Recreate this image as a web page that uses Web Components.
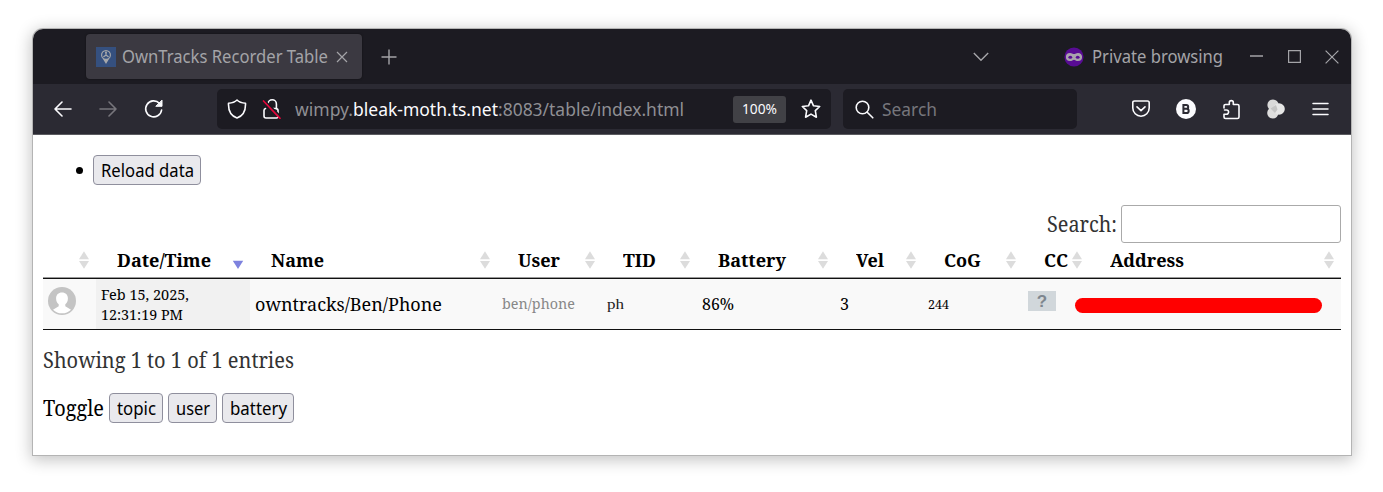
<!DOCTYPE html>
<html lang="en"><head><meta charset="utf-8"><title>OwnTracks Recorder Table</title>
<style>
body{margin:0;background:#fff;width:1383px;height:492px;overflow:hidden;font-family:"Noto Sans",sans-serif}
</style></head><body>
<browser-window></browser-window>
<script>
const define=(name,html,ready)=>customElements.define(name,class extends HTMLElement{
  constructor(){super();this.attachShadow({mode:'open'}).innerHTML=html}
  connectedCallback(){if(ready)ready.call(this)}
});
// A text run condensed or widened to a given width: w = width, s = font size
define('fit-text','<style>:host{display:block;white-space:pre;flex:none;line-height:1.3}span{display:inline-block;transform-origin:0 50%}</style><span><slot></slot></span>',function(){
  this.style.fontSize=this.getAttribute('s')+'px';
  const w=+this.getAttribute('w'),sp=this.shadowRoot.querySelector('span');
  const nat=sp.getBoundingClientRect().width;
  sp.style.transform='scaleX('+w/nat+')';this.style.width=w+'px';
});
define('tab-strip',`<style>
:host{display:flex;height:55px;background:#1c1b22;align-items:center;color:#a4a4a8}
.tab{display:flex;align-items:center;margin-left:52.500px;width:276px;height:45px;background:#3b3941;border-radius:4px;box-shadow:0 0 2px #0008}
svg{display:block;flex:none}
.fav{margin-left:10px}.tab fit-text{margin-left:6.500px}.x{margin-left:7.500px}.plus{margin-left:19.500px}
.chev{margin-left:576px}.mask{margin-left:75px}.pb{margin-left:7.500px}.min{margin-left:27.500px}.max{margin-left:24.500px}.cl{margin-left:24px}
</style>
<div class="tab"><svg class="fav" width="20" height="20" viewBox="0 0 20 20"><rect width="20" height="20" fill="#35507f"/><path d="M10 17 6.8 11.8A5 5 0 1 1 13.2 11.8Z" fill="#a5a7ab"/><circle cx="10" cy="8" r="3.8" fill="#35507f"/><path d="M10 5.2v3M7.4 10l2.600-2 2.600 2" fill="none" stroke="#a5a7ab" stroke-width="1.3"/><circle cx="10" cy="5.4" r="1" fill="#a5a7ab"/></svg>
<fit-text w="206" s="17.600">OwnTracks Recorder Table</fit-text>
<svg class="x" width="12" height="12" viewBox="0 0 12 12"><path d="M1 1l10 10M11 1L1 11" stroke="#a4a4a8" stroke-width="1.2"/></svg></div>
<svg class="plus" width="16" height="16" viewBox="0 0 16 16"><path d="M8 .5v15M.5 8h15" stroke="#a4a4a8" stroke-width="1.4"/></svg>
<svg class="chev" width="16" height="10" viewBox="0 0 16 10"><path d="M.8 1 8 8.3 15.2 1" fill="none" stroke="#a4a4a8" stroke-width="1.4"/></svg>
<svg class="mask" width="20" height="20" viewBox="0 0 20 20"><circle cx="10" cy="10" r="9.6" fill="#580c94"/><path d="M6 7.200c-2 0-3 1.300-3 2.900s1 2.900 3 2.900c1.800 0 2.600-1.400 4-1.400s2.200 1.400 4 1.400c2 0 3-1.300 3-2.900s-1-2.900-3-2.900c-1.800 0-2.600.9-4 .9s-2.200-.9-4-.9Z" fill="#a9a3ad" stroke="#a9a3ad" stroke-width="2.200"/><ellipse cx="6.300" cy="10.200" rx="1.900" ry="1.500" fill="#580c94"/><ellipse cx="13.700" cy="10.200" rx="1.900" ry="1.500" fill="#580c94"/></svg>
<fit-text class="pb" w="131" s="17.600">Private browsing</fit-text>
<svg class="min" width="13" height="3" viewBox="0 0 13 3"><path d="M0 1h13" stroke="#a4a4a8" stroke-width="1.3"/></svg>
<svg class="max" width="13" height="13" viewBox="0 0 13 13"><path d="M.6.6h11.800v11.800H.6z" fill="none" stroke="#a4a4a8" stroke-width="1.2"/></svg>
<svg class="cl" width="14" height="14" viewBox="0 0 14 14"><path d="M.6.6l12.800 12.800M13.400.6.6 13.400" stroke="#a4a4a8" stroke-width="1.2"/></svg>`);
define('nav-bar',`<style>
:host{display:flex;height:50px;background:#2b2a33;align-items:center;color:#fbfbfe;border-bottom:1px solid #5b5b60}
svg{display:block;flex:none;fill:none;stroke:#fbfbfe;stroke-width:1.6;stroke-linecap:round;stroke-linejoin:round}
.box{display:flex;align-items:center;height:40px;background:#1c1b22;border-radius:5px}
.url{width:614px;margin-left:53px}.u{display:flex;margin-left:13px;color:#8f8f94}.u .h{color:#fbfbfe}
.z{display:flex;align-items:center;justify-content:center;width:53px;height:27px;background:#414146;border-radius:3px;margin-left:49px}
.s{width:234px;margin-left:12px;color:#76767c}
</style>
<svg style="margin-left:21px" width="18" height="18" viewBox="0 0 18 18"><path d="M17 9H1M8 2 1 9l7 7"/></svg>
<svg style="margin-left:27px;stroke:#77767c" width="18" height="18" viewBox="0 0 18 18"><path d="M1 9h16M10 2l7 7-7 7"/></svg>
<svg style="margin-left:27px" width="20" height="20" viewBox="0 0 20 20"><path d="M17.600 11A8 8 0 1 1 15.500 4.400"/><path d="M18 1.500v5.800h-5.800z" fill="#fbfbfe" stroke-width="1"/></svg>
<div class="box url">
<svg style="margin-left:10px" width="20" height="20" viewBox="0 0 20 20"><path d="M10 1C8.200 2.900 4.500 4 1.500 4.200c-.3 6.800 2.300 12.500 8.500 14.800 6.200-2.300 8.800-8 8.500-14.800C15.500 4 11.800 2.900 10 1Z"/></svg>
<svg style="margin-left:15px" width="20" height="20" viewBox="0 0 20 20"><path d="M3.500 9.500q-1.500.4-1.500 2V17q0 2 2 2h10.500q1.500 0 1.500-2v-5.500q0-2-2-2h-3M6 5.500V5a4.200 4.200 0 0 1 8.400 0v5"/><path d="M2.500 1.500 19.500 18.500" stroke="#1c1b22" stroke-width="2" /><path d="M1.500 2 18 19.300" stroke="#e3063b" stroke-width="1.700"/></svg>
<div class="u"><fit-text w="58" s="17.600">wimpy.</fit-text><fit-text class="h" w="145" s="17.600">bleak-moth.ts.net</fit-text><fit-text w="186" s="17.600">:8083/table/index.html</fit-text></div>
<div class="z"><fit-text w="35" s="14">100%</fit-text></div>
<svg style="margin-left:15px" width="20" height="20" viewBox="0 0 20 20"><path d="M10 1.200 12.500 6.800 18.700 7.500 14.300 11.700 15.400 18.200 10 15.100 4.600 18.200 5.700 11.700 1.300 7.500 7.500 6.800Z"/></svg></div>
<div class="box s"><svg style="margin-left:12px" width="19" height="19" viewBox="0 0 19 19"><circle cx="7.500" cy="7.500" r="6.300"/><path d="m12.200 12.200 5.600 5.600"/></svg><fit-text style="margin-left:8px" w="55" s="17.600">Search</fit-text></div>
<svg style="margin-left:54px" width="20" height="18" viewBox="0 0 20 18"><path d="M3.500 1h13q1.700 0 1.700 1.700V8a8.200 8.200 0 0 1-16.400 0V2.700Q1.800 1 3.500 1ZM6 6.800l4 3.800 4-3.800"/></svg>
<svg style="margin-left:25px" width="20" height="20" viewBox="0 0 20 20"><circle cx="10" cy="10" r="10" fill="#fbfbfe" stroke="none"/><path d="M7.400 6v8h3.200a2.100 2.100 0 0 0 0-4.200H7.400h2.900a1.900 1.900 0 0 0 0-3.800Z" stroke="#2b2a33" stroke-width="2" stroke-linejoin="miter"/></svg>
<svg style="margin-left:26px" width="20" height="21" viewBox="0 0 20 21"><path d="M2 9V6.800Q2 5.500 3.500 5.500H7.300V3.600a2 2 0 0 1 4 0v1.900H15.500Q17 5.500 17 7V18Q17 19.500 15.500 19.500H3.500Q2 19.500 2 18V15.200H4.500a2.100 2.100 0 0 0 0-4.200H2.500"/></svg>
<svg style="margin-left:24px;stroke:none" width="20" height="20" viewBox="0 0 20 20"><circle cx="7" cy="6" r="5.600" fill="#d9d9d9"/><circle cx="6.800" cy="14" r="5.600" fill="#dedede"/><circle cx="13" cy="10" r="5.800" fill="#e6e6e6"/><path d="M4.500 9.500 10 6l1.500 4.500L9 14Z" fill="#c4c4c4"/></svg>
<svg style="margin-left:26px;stroke-width:1.500" width="17" height="14" viewBox="0 0 17 14"><path d="M1 1.500h15M1 7h15M1 12.500h15"/></svg>`);
define('page-button',`<style>:host{display:flex;align-items:center;justify-content:center;box-sizing:border-box;height:30px;background:#e9e9ed;border:1px solid #8f8f9d;border-radius:4px;color:#000;font-family:"Noto Sans",sans-serif}</style><slot></slot>`);
define('sort-icon',`<style>:host{display:block;width:12px;height:18px}svg{display:block}:host([desc]) .u,:host([desc]) .d,.a{display:none}:host([desc]) .a{display:block}</style>
<svg width="12" height="18" viewBox="0 0 12 18"><path class="u" d="M1 8.200h10L6 .3Z" fill="#dcdcdc"/><path class="d" d="M1 10h10L6 17.700Z" fill="#dcdcdc"/><path class="a" d="M.8 9.800h10.400L6 18Z" fill="#7d82de"/></svg>`);
define('data-table',`<style>
:host{display:block;width:1298px}
.r{display:grid;grid-template-columns:53px 154px 247px 105px 95px 138px 88px 100px 66px 252px}
.r>div{display:flex;align-items:center;box-sizing:border-box}
.head{height:34px;border-bottom:1px solid #999;font-weight:bold}
.head>div{padding:0 6px 0 21px;justify-content:space-between}
.head sort-icon{margin-left:auto;flex:none}
.row{height:50px;background:#f9f9f9;border-top:1px solid #111;border-bottom:1px solid #111}
.row>div{padding-left:5px}
.row .dt{background:#f1f1f1;flex-direction:column;align-items:flex-start;justify-content:center}
.dt fit-text{line-height:20px}
.mark{flex:none;width:247px;height:15px;border-radius:8px;background:#f00;margin-left:-19px;margin-top:2px;position:relative}
.flag{margin-top:-7px}
</style>
<div class="r head"><div><sort-icon></sort-icon></div>
<div><fit-text w="94" s="18.800">Date/Time</fit-text><sort-icon desc></sort-icon></div>
<div><fit-text w="53" s="18.800">Name</fit-text><sort-icon></sort-icon></div>
<div><fit-text w="42" s="18.800">User</fit-text><sort-icon></sort-icon></div>
<div><fit-text w="33" s="18.800">TID</fit-text><sort-icon></sort-icon></div>
<div><fit-text w="68" s="18.800">Battery</fit-text><sort-icon></sort-icon></div>
<div><fit-text w="28" s="18.800">Vel</fit-text><sort-icon></sort-icon></div>
<div><fit-text w="37" s="18.800">CoG</fit-text><sort-icon></sort-icon></div>
<div><fit-text w="24" s="18.800">CC</fit-text><sort-icon></sort-icon></div>
<div><fit-text w="74" s="18.800">Address</fit-text><sort-icon></sort-icon></div></div>
<div class="r row"><div><svg style="margin-top:-7px" width="28" height="28" viewBox="0 0 28 28"><circle cx="14" cy="14" r="14" fill="#c4c4c4"/><path d="M14 5.500c-3.600 0-5.900 2.300-5.900 5.900 0 2.700 1.100 4.700 2.600 5.900v2L5 22.700A13 13 0 0 0 23 22.700l-5.700-3.400v-2c1.500-1.200 2.600-3.200 2.600-5.900 0-3.600-2.300-5.900-5.900-5.900Z" fill="#fff"/></svg></div>
<div class="dt"><fit-text w="88" s="15">Feb 15, 2025,</fit-text><fit-text w="82" s="15">12:31:19 PM</fit-text></div>
<div><fit-text w="187" s="18.800">owntracks/Ben/Phone</fit-text></div>
<div><fit-text style="color:#888" w="73" s="15.300">ben/phone</fit-text></div>
<div><fit-text w="17" s="14.500" style="font-family:'Liberation Serif',serif;color:#222">ph</fit-text></div>
<div><fit-text w="32" s="15.800">86%</fit-text></div>
<div><fit-text w="9" s="15.800">3</fit-text></div>
<div><fit-text w="21" s="12.800">244</fit-text></div>
<div><svg class="flag" width="28" height="20" viewBox="0 0 28 20"><rect width="28" height="20" fill="#d1d7db"/><text x="14" y="15.500" text-anchor="middle" font-family="Liberation Sans,sans-serif" font-weight="bold" font-size="17" fill="#7e868e">?</text></svg></div>
<div><span class="mark"></span></div></div>`);
define('table-page',`<style>
:host{display:block;box-sizing:border-box;height:321px;background:#fff;padding:20px 10px 0;color:#000;font-family:"Noto Serif","DejaVu Serif Condensed","DejaVu Serif",serif;font-stretch:semi-condensed}
.re{display:flex;align-items:center}.dot{width:7px;height:7px;border-radius:50%;background:#000;margin:1px 10px 0 33px}
.se{display:flex;justify-content:flex-end;align-items:center;height:38px;margin:20px 0 0;color:#333;gap:4px}
.in{box-sizing:border-box;width:220px;height:38px;border:1px solid #aaa;border-radius:3px}
.sh{display:flex;align-items:center;height:32px;margin-top:14px;color:#333}
.to{display:flex;align-items:center;margin-top:17px}
</style>
<div class="re"><span class="dot"></span><page-button style="width:108px"><fit-text w="93" s="17.600">Reload data</fit-text></page-button></div>
<div class="se"><fit-text w="70" s="21.300">Search:</fit-text><span class="in"></span></div>
<data-table></data-table>
<div class="sh"><fit-text w="251" s="21.300">Showing 1 to 1 of 1 entries</fit-text></div>
<div class="to"><fit-text w="61" s="21.300">Toggle</fit-text><page-button style="margin-left:5px;width:54px"><fit-text w="39" s="17.600">topic</fit-text></page-button><page-button style="margin-left:5px;width:49px"><fit-text w="34" s="17.600">user</fit-text></page-button><page-button style="margin-left:5px;width:72px"><fit-text w="57" s="17.600">battery</fit-text></page-button></div>`);
define('browser-window',`<style>:host{display:block;padding:29px 0 0 33px}
.w{width:1318px;height:426px;border-radius:10px 10px 0 0;overflow:hidden;background:#fff;box-shadow:0 0 0 1px #b4b4b4,0 3px 16px 2px #0000003d}</style>
<div class="w"><tab-strip></tab-strip><nav-bar></nav-bar><table-page></table-page></div>`);
</script></body></html>
